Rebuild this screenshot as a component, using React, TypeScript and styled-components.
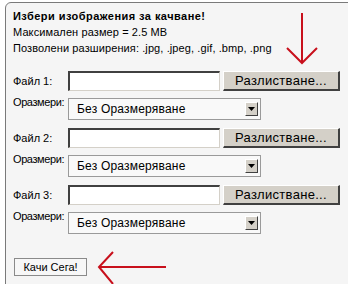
import React from "react";
import styled, { createGlobalStyle } from "styled-components";

const GlobalStyle = createGlobalStyle`
  html, body {
    margin: 0;
    padding: 0;
    background: #ffffff;
    overflow: hidden;
  }
  body {
    font-family: "Liberation Sans", Arial, sans-serif;
  }
`;

const Page = styled.div`
  position: relative;
  width: 348px;
  height: 284px;
  overflow: hidden;
`;

const Panel = styled.div`
  margin: 2px 0 0 5px;
  width: 400px;
  height: 320px;
  box-sizing: border-box;
  background: #f5f5f5;
  border: 1px solid #7a7a7a;
  border-top-left-radius: 6px;
  padding: 5px 0 0 7px;
  color: #000;
`;

const InfoLine = styled.div<{ $bold?: boolean }>`
  font-size: 11px;
  line-height: 16px;
  font-weight: ${(p) => (p.$bold ? "bold" : "normal")};
  letter-spacing: ${(p) => (p.$bold ? "0.45px" : "0.1px")};
  white-space: nowrap;
`;

const Form = styled.div`
  display: grid;
  grid-template-columns: 55px auto;
  margin-top: 15px;
`;

const FileLabel = styled.label`
  font-size: 11px;
  line-height: 20px;
  height: 20px;
`;

const SizeLabel = styled.label`
  font-size: 11px;
  line-height: 12px;
  letter-spacing: -0.4px;
  white-space: nowrap;
  margin-top: 5px;
`;

const FileRow = styled.div`
  display: flex;
  gap: 3px;
  height: 20px;
`;

const FileInput = styled.div`
  width: 152px;
  height: 20px;
  box-sizing: border-box;
  background: #fff;
  border-style: solid;
  border-width: 2px 1px 1px 2px;
  border-color: #404040 #d4d0c8 #d4d0c8 #404040;
`;

const BrowseButton = styled.div`
  width: 117px;
  height: 20px;
  box-sizing: border-box;
  background: #d4d0c8;
  border-style: solid;
  border-width: 1px 2px 2px 1px;
  border-color: #fff #404040 #404040 #fff;
  font-size: 13px;
  line-height: 17px;
  text-align: center;
  letter-spacing: 0.3px;
`;

const SelectBox = styled.div<{ $last?: boolean }>`
  display: flex;
  align-items: center;
  justify-content: space-between;
  width: 193px;
  height: 22px;
  box-sizing: border-box;
  margin: 7px 0 ${(p) => (p.$last ? "24px" : "8px")};
  padding: 0 2px 0 8px;
  background: #f9f9f9;
  border: 1px solid #9a9a9a;
  font-size: 12px;
  letter-spacing: 0.2px;
`;

const DropArrow = styled.div`
  width: 13px;
  height: 14px;
  box-sizing: border-box;
  background: #d4d0c8;
  border-style: solid;
  border-width: 1px;
  border-color: #fff #404040 #404040 #fff;
  display: flex;
  align-items: center;
  justify-content: center;
`;

const SubmitButton = styled.div`
  width: 73px;
  height: 18px;
  box-sizing: border-box;
  margin-left: 1px;
  background: #f7f7f7;
  border: 1px solid #8a8a8a;
  font-size: 11px;
  line-height: 16px;
  text-align: center;
`;

const Annotations = styled.svg`
  position: absolute;
  left: 0;
  top: 0;
  pointer-events: none;
`;

const rows = [1, 2, 3];

export default function App() {
  return (
    <Page>
      <GlobalStyle />
      <Panel>
        <InfoLine $bold>Избери изображения за качване!</InfoLine>
        <InfoLine>Максимален размер = 2.5 MB</InfoLine>
        <InfoLine>Позволени разширения: .jpg, .jpeg, .gif, .bmp, .png</InfoLine>
        <Form>
          {rows.map((n) => (
            <React.Fragment key={n}>
              <FileLabel>Файл {n}:</FileLabel>
              <FileRow>
                <FileInput />
                <BrowseButton>Разлистване...</BrowseButton>
              </FileRow>
              <SizeLabel>Оразмери:</SizeLabel>
              <SelectBox $last={n === 3}>
                <span>Без Оразмеряване</span>
                <DropArrow>
                  <svg width="7" height="4" viewBox="0 0 7 4">
                    <path d="M0 0h7L3.5 4z" fill="#000" />
                  </svg>
                </DropArrow>
              </SelectBox>
            </React.Fragment>
          ))}
        </Form>
        <SubmitButton>Качи Сега!</SubmitButton>
      </Panel>
      <Annotations width="348" height="284" viewBox="0 0 348 284">
        <g stroke="#c8101c" strokeWidth="2" fill="none">
          <path d="M302 13V63" />
          <path d="M287 48L302 63L317 48" />
          <path d="M166 267H99" />
          <path d="M113 252L99 267L113 284" />
        </g>
      </Annotations>
    </Page>
  );
}
